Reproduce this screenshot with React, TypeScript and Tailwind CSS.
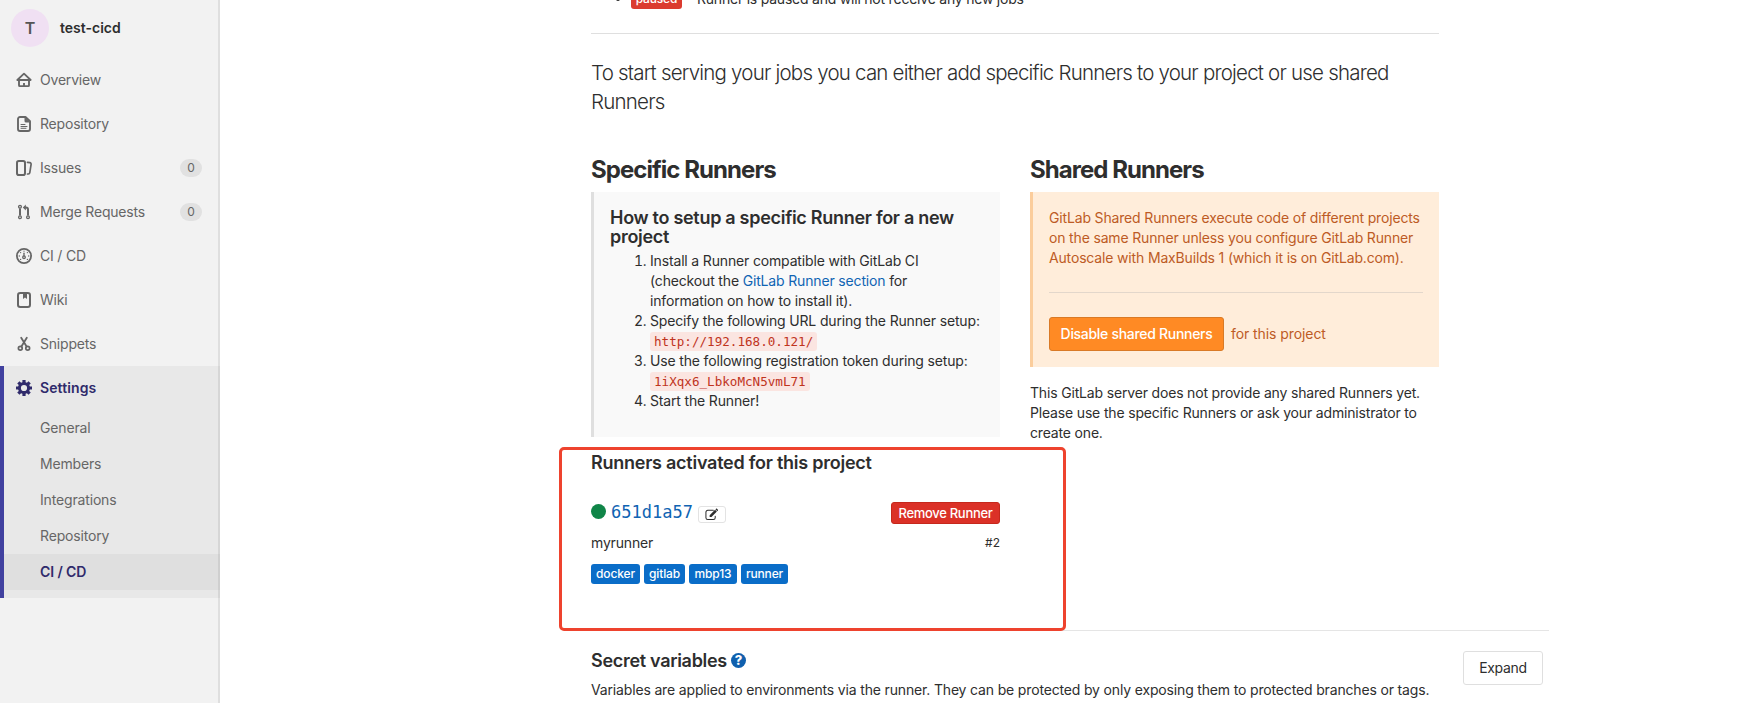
import React from 'react';

type IconProps = { className?: string };

const HomeIcon = ({ className }: IconProps) => (
  <svg className={className} viewBox="0 0 16 16" fill="none" stroke="currentColor" strokeLinejoin="round" strokeLinecap="round">
    <path strokeWidth="1.800" d="M1.300 8 8 1.700 14.700 8z" />
    <path strokeWidth="1.900" d="M3 8.200v5c0 .5.4.9.9.9h8.200c.5 0 .9-.4.9-.9v-5" />
    <path strokeWidth="1.900" strokeLinecap="butt" d="M8 11v3" />
  </svg>
);

const DocIcon = ({ className }: IconProps) => (
  <svg className={className} viewBox="0 0 16 16" fill="none" stroke="currentColor" strokeLinejoin="round">
    <path strokeWidth="1.900" d="M4 1h5.500L14 5.300V13a2 2 0 0 1-2 2H4a2 2 0 0 1-2-2V3a2 2 0 0 1 2-2z" />
    <path fill="currentColor" stroke="none" d="M8.500 1 14.300 6.500H10A1.500 1.500 0 0 1 8.500 5z" />
    <path strokeWidth="1" strokeLinecap="round" d="M5 8.500h4M5 10.500h6M5 12.300h5" />
  </svg>
);

const IssuesIcon = ({ className }: IconProps) => (
  <svg className={className} viewBox="0 0 16 16" fill="none" stroke="currentColor" strokeLinejoin="round" strokeLinecap="round">
    <rect x="1" y="1" width="8" height="14" rx="1.800" strokeWidth="2" />
    <path strokeWidth="1.700" d="M11.500 2.400l2.400.3c.8.1 1.300.8 1.200 1.600l-1.300 8.400c-.1.800-.7 1.300-1.500 1.300h-.8" />
  </svg>
);

const MergeIcon = ({ className }: IconProps) => (
  <svg className={className} viewBox="0 0 16 16" fill="none" stroke="currentColor">
    <circle cx="4" cy="2.800" r="1.400" strokeWidth="1.300" />
    <circle cx="4" cy="13.200" r="1.400" strokeWidth="1.300" />
    <circle cx="12" cy="13.200" r="1.400" strokeWidth="1.300" />
    <path strokeWidth="2" d="M4 4.500v7M12 11.500V5.400c0-1.200-.8-2-2-2H9" />
    <path fill="currentColor" stroke="none" d="M9.800.500v6L6.800 3.500z" />
  </svg>
);

const PipelineIcon = ({ className }: IconProps) => (
  <svg className={className} viewBox="0 0 16 16" fill="none" stroke="currentColor">
    <circle cx="8" cy="8" r="7.100" strokeWidth="1.800" />
    <circle cx="8" cy="9.200" r="1.300" strokeWidth="1.300" />
    <path strokeWidth="1.300" strokeLinecap="round" d="M8 5.200v3" />
    <g fill="currentColor" stroke="none">
      <circle cx="8" cy="3.200" r=".6" />
      <circle cx="4.600" cy="4.600" r=".7" />
      <circle cx="11.400" cy="4.600" r=".7" />
      <circle cx="3.300" cy="8" r=".7" />
      <circle cx="12.700" cy="8" r=".7" />
      <circle cx="4.600" cy="11.400" r=".7" />
      <circle cx="11.400" cy="11.400" r=".7" />
    </g>
  </svg>
);

const WikiIcon = ({ className }: IconProps) => (
  <svg className={className} viewBox="0 0 16 16" fill="none" stroke="currentColor">
    <rect x="2" y="1" width="12" height="14" rx="2.200" strokeWidth="2" />
    <path fill="currentColor" stroke="none" d="M7 1h4v6L9 5.600 7 7z" />
  </svg>
);

const SnippetsIcon = ({ className }: IconProps) => (
  <svg className={className} viewBox="0 0 16 16" fill="none" stroke="currentColor" strokeLinecap="round">
    <circle cx="4.300" cy="12.200" r="1.900" strokeWidth="1.700" />
    <circle cx="11.700" cy="12.200" r="1.900" strokeWidth="1.700" />
    <path strokeWidth="1.800" d="M5.200 1.800 10.600 10.500M10.800 1.800 5.400 10.500" />
  </svg>
);

const GearIcon = ({ className }: IconProps) => (
  <svg className={className} viewBox="0 0 16 16" fill="none" stroke="currentColor">
    <circle cx="8" cy="8" r="4.600" strokeWidth="3" />
    <path
      strokeWidth="3.200"
      d="M8 0v3M8 13v3M0 8h3M13 8h3M2.350 2.350l2.100 2.100M11.550 11.550l2.100 2.100M2.350 13.650l2.100-2.100M11.550 4.450l2.100-2.100"
    />
  </svg>
);

const EditIcon = ({ className }: IconProps) => (
  <svg className={className} viewBox="0 0 14 14" fill="none" stroke="currentColor">
    <path strokeWidth="1.100" strokeLinecap="round" d="M9 2.500H3A2 2 0 0 0 1 4.500v6a2 2 0 0 0 2 2h6a2 2 0 0 0 2-2V8.800" />
    <path fill="currentColor" stroke="none" d="M5 7.700 10.800 1.900l2 2L7 9.700H5zM11.300 1.400l.6-.6c.3-.3.700-.3 1 0l1 1c.3.3.3.700 0 1l-.6.600z" />
  </svg>
);

const navItems = [
  { label: 'Overview', Icon: HomeIcon },
  { label: 'Repository', Icon: DocIcon },
  { label: 'Issues', Icon: IssuesIcon, count: 0 },
  { label: 'Merge Requests', Icon: MergeIcon, count: 0 },
  { label: 'CI / CD', Icon: PipelineIcon },
  { label: 'Wiki', Icon: WikiIcon },
  { label: 'Snippets', Icon: SnippetsIcon },
];

const settingsItems = ['General', 'Members', 'Integrations', 'Repository'];

const tags = [
  { name: 'docker', width: 'w-[49px]' },
  { name: 'gitlab', width: 'w-[41px]' },
  { name: 'mbp13', width: 'w-[48px]' },
  { name: 'runner', width: 'w-[47px]' },
];

function Sidebar() {
  return (
    <aside className="h-[703px] w-[220px] shrink-0 bg-[#f2f2f2] text-[#666] shadow-[inset_-2px_0_0_#dfdfdf]">
      <div className="flex h-[58px] items-start pt-[9px] pl-[11px]">
        <div className="flex size-[38px] items-center justify-center rounded-full bg-[#f0e0f3] text-base font-semibold text-[#555]">T</div>
        <div className="ml-[11px] leading-[38px] font-semibold tracking-normal text-[#2e2e2e]">test-cicd</div>
      </div>
      <nav>
        {navItems.map(({ label, Icon, count }) => (
          <div key={label} className="flex h-11 items-center pr-[18px] pl-4">
            <Icon className="mr-2 size-4" />
            <span className="grow tracking-[-0.2px]">{label}</span>
            {count !== undefined && (
              <span className="flex h-[18px] w-[22px] items-center justify-center rounded-full bg-[#e1e1e1] text-xs">{count}</span>
            )}
          </div>
        ))}
        <div className="border-l-4 border-[#41419f] bg-[#e8e8e8] pb-2 shadow-[inset_-2px_0_0_#d6d6d6]">
          <div className="flex h-11 items-center pl-3 font-semibold tracking-[0.1px] text-[#2f2a6b]">
            <GearIcon className="mr-2 size-4" />
            Settings
          </div>
          {settingsItems.map((label) => (
            <div key={label} className="h-9 pl-9 leading-9">{label}</div>
          ))}
          <div className="h-9 bg-[#dfdfdf] pl-9 leading-9 font-semibold tracking-[-0.1px] text-[#2f2a6b] shadow-[inset_-2px_0_0_#cfcfcf]">CI / CD</div>
        </div>
      </nav>
    </aside>
  );
}

function Code({ children }: { children: React.ReactNode }) {
  return (
    <code className="rounded-[3px] bg-[#fbe5e1] px-1 py-0.5 font-['DejaVu_Sans_Mono',monospace] text-[12.6px] tracking-normal text-[#c0341d]">{children}</code>
  );
}

function SpecificRunners() {
  return (
    <section className="w-[409px]">
      <h3 className="h-[35px] text-2xl leading-[26px] font-[650] tracking-[-0.95px]">Specific Runners</h3>
      <div className="h-[245px] border-l-[3px] border-[#dfdfdf] bg-[#f9f9f9] pt-4 pr-4 pl-4">
        <h4 className="text-lg leading-[19px] font-semibold tracking-[-0.29px]">How to setup a specific Runner for a new project</h4>
        <ol className="mt-[5.6px] list-decimal pl-10">
          <li>
            Install a Runner compatible with GitLab CI<br />
            (checkout the <a className="text-[#1064b3]">GitLab Runner section</a> for<br />
            information on how to install it).
          </li>
          <li className="whitespace-nowrap">
            Specify the following URL during the Runner setup:<br />
            <Code>http://192.168.0.121/</Code>
          </li>
          <li className="whitespace-nowrap">
            Use the following registration token during setup:<br />
            <Code>1iXqx6_LbkoMcN5vmL71</Code>
          </li>
          <li>Start the Runner!</li>
        </ol>
      </div>
      <h4 className="mt-4 text-lg leading-5 font-semibold tracking-[-0.25px]">Runners activated for this project</h4>
      <div className="mt-[29px] flex h-[22px] items-start">
        <span className="mt-0.5 mr-[5px] size-[15px] rounded-full bg-[#108548]" />
        <a className="font-['DejaVu_Sans_Mono',monospace] text-[17px] leading-5 tracking-normal text-[#1064b3]">651d1a57</a>
        <span className="mt-1 ml-[5px] flex h-[17px] w-7 items-center justify-center rounded-[3px] border border-[#e3e3e3] bg-white text-[#2e2e2e]">
          <EditIcon className="size-[13px]" />
        </span>
        <button className="ml-auto h-[22px] w-[109px] rounded-[3px] border border-[#c5281c] bg-[#db3127] text-[13px] leading-5 font-medium tracking-[-0.3px] text-white">Remove Runner</button>
      </div>
      <div className="mt-[9px] flex items-center justify-between">
        <span>myrunner</span>
        <span className="text-xs tracking-normal">#2</span>
      </div>
      <div className="mt-[11px] flex gap-1 text-xs font-medium text-white">
        {tags.map(({ name, width }) => (
          <span key={name} className={`${width} h-5 rounded-[3px] bg-[#0a6dc8] text-center leading-5`}>{name}</span>
        ))}
      </div>
    </section>
  );
}

function SharedRunners() {
  return (
    <section className="w-[409px]">
      <h3 className="h-[35px] text-2xl leading-[26px] font-[650] tracking-[-0.95px]">Shared Runners</h3>
      <div className="h-[175px] border-l-[3px] border-[#fbcd9c] bg-[#ffedda] pt-4 pr-4 pl-4 text-[#bd5b25]">
        <p className="whitespace-nowrap">
          GitLab Shared Runners execute code of different projects<br />
          on the same Runner unless you configure GitLab Runner<br />
          Autoscale with MaxBuilds 1 (which it is on GitLab.com).
        </p>
        <hr className="mt-6 border-[#e3d7cb]" />
        <div className="mt-6 flex items-center">
          <button className="h-[34px] w-[175px] rounded-[3px] border border-[#d97a26] bg-[#ff8a24] font-medium tracking-[-0.3px] text-white">Disable shared Runners</button>
          <span className="ml-[7px] tracking-[-0.08px]">for this project</span>
        </div>
      </div>
      <p className="mt-4 tracking-[-0.17px] whitespace-nowrap">
        This GitLab server does not provide any shared Runners yet.<br />
        Please use the specific Runners or ask your administrator to<br />
        create one.
      </p>
    </section>
  );
}

export default function App() {
  return (
    <div className="relative flex h-[703px] w-[1741px] overflow-hidden bg-white font-['Inter',sans-serif] text-sm tracking-[-0.16px] text-[#2e2e2e]">
      <Sidebar />
      <main className="-mt-[11px] pl-[371px]">
        <div className="flex h-5 items-center pl-[25px]">
          <span className="mr-[11px] size-1 rounded-full bg-[#2e2e2e]" />
          <span className="mr-[15px] h-5 w-[51px] rounded-[3px] bg-[#db3b2f] text-center text-xs leading-5 font-medium text-white">paused</span>
          <span className="tracking-[-0.22px]">Runner is paused and will not receive any new jobs</span>
        </div>
        <hr className="mt-6 w-[848px] border-[#dfdfdf]" />
        <p className="mt-6 w-[848px] text-[20.5px] leading-[29.4px] font-[350] tracking-[-0.79px] whitespace-nowrap">
          To start serving your jobs you can either add specific Runners to your project or use shared<br />
          Runners
        </p>
        <div className="mt-10 flex h-[473px] gap-[30px]">
          <SpecificRunners />
          <SharedRunners />
        </div>
        <section className="flex w-[958px] items-start border-t border-[#e5e5e5]">
          <div className="grow pt-5">
            <h4 className="flex h-5 items-center text-lg leading-5 font-semibold tracking-[-0.3px]">
              Secret variables
              <span className="ml-1 flex size-[15px] items-center justify-center rounded-full bg-[#1060ae] text-[13px] leading-none font-extrabold text-white">?</span>
            </h4>
            <p className="mt-[9px] whitespace-nowrap">
              Variables are applied to environments via the runner. They can be protected by only exposing them to protected branches or tags.
            </p>
          </div>
          <button className="mt-5 mr-1.5 h-[34px] w-20 rounded-[3px] border border-[#dfdfdf] bg-white tracking-[-0.3px]">Expand</button>
        </section>
      </main>
      <div className="pointer-events-none absolute top-[447px] left-[559px] h-[184px] w-[507px] rounded-[5px] border-3 border-[#ee432e]" />
    </div>
  );
}
